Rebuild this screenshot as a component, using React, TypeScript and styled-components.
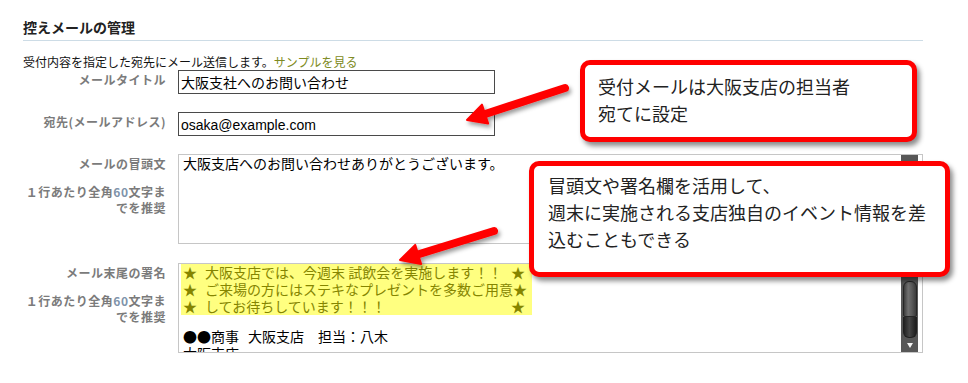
import React from 'react';
import styled, { createGlobalStyle } from 'styled-components';

const Global = createGlobalStyle`
  html, body { margin: 0; padding: 0; background: #fff; }
  body { font-family: "Noto Sans CJK JP", "Noto Sans", sans-serif; color: #222; }
`;

const Page = styled.div`
  position: relative;
  width: 968px;
  height: 383px;
  overflow: hidden;
  box-sizing: border-box;
  padding: 17px 45px 0 23px;
  background: #fff;
`;

const Heading = styled.h2`
  margin: 0;
  font-size: 14px;
  font-weight: bold;
  line-height: 20px;
  color: #222;
  padding-bottom: 3px;
  border-bottom: 1px solid #cddce6;
`;

const Desc = styled.p`
  margin: 13px 0 0;
  font-size: 12px;
  line-height: 16px;
  color: #111;
  white-space: nowrap;
`;

const SampleLink = styled.span`
  color: #7d8a22;
`;

const Form = styled.div`
  display: grid;
  grid-template-columns: 143px 1fr;
  column-gap: 12px;
  row-gap: 18px;
`;

const LabelCell = styled.div<{ $shift?: number }>`
  text-align: right;
  padding-top: ${(p) => 1 + (p.$shift ?? 0)}px;
  color: #7b7b7b;
  font-weight: bold;
  font-size: 12px;
  letter-spacing: 0.5px;
  white-space: nowrap;
`;

const LabelTitle = styled.div`
  line-height: 17px;
`;

const LabelNote = styled.div`
  margin-top: 12px;
  line-height: 16px;
`;

const Num = styled.span`
  color: #7f93aa;
`;

const FieldCell = styled.div<{ $shift?: number }>`
  margin-top: ${(p) => p.$shift ?? 0}px;
`;

const TextInput = styled.div`
  box-sizing: border-box;
  width: 317px;
  height: 24px;
  border: 1px solid #4a4a4a;
  padding: 0 2px;
  font-size: 14px;
  line-height: 22px;
  color: #000;
  white-space: nowrap;
  overflow: hidden;
`;

const EmailText = styled.span`
  font-family: "Liberation Sans", Arial, sans-serif;
`;

const TextArea = styled.div`
  box-sizing: border-box;
  width: 745px;
  height: 90px;
  border: 1px solid #c6c6c6;
  display: flex;
  overflow: hidden;
`;

const AreaContent = styled.div`
  flex: 1;
  padding: 0 0 0 2px;
  font-size: 14px;
  line-height: 17px;
  color: #000;
  overflow: hidden;
  white-space: nowrap;
`;

const AreaLine = styled.div`
  padding-left: 2px;
`;

const Highlight = styled.div`
  width: 351px;
  box-sizing: border-box;
  background: #ffff80;
  color: #858500;
  padding-left: 2px;
`;

const HLine = styled.div`
  display: flex;
  justify-content: space-between;
  padding-right: 7px;
`;

const Star = styled.span`
  margin-right: 8px;
`;

const Blank = styled.div`
  height: 13px;
`;

const Gap = styled.span`
  display: inline-block;
  width: 9px;
`;

const Scrollbar = styled.div`
  width: 17px;
  margin-right: 4px;
  background: #575757;
  display: flex;
  flex-direction: column;
  align-items: center;
  flex-shrink: 0;
`;

const ScrollSpace = styled.div<{ $h: number }>`
  height: ${(p) => p.$h}px;
  flex-shrink: 0;
`;

const Thumb = styled.div`
  box-sizing: border-box;
  width: 14px;
  height: 36px;
  border: 1px solid #262626;
  border-radius: 6px 6px 2px 2px;
  background: linear-gradient(to right, #3c3c3c, #707070 35%, #5a5a5a 65%, #3a3a3a);
  flex-shrink: 0;
`;

const TrackLower = styled.div`
  box-sizing: border-box;
  width: 14px;
  height: 21px;
  border: 1px solid #202020;
  border-top: none;
  border-radius: 0 0 6px 6px;
  background: linear-gradient(to right, #222, #474747 45%, #333 70%, #1e1e1e);
  flex-shrink: 0;
`;

const DownBtn = styled.div`
  flex: 1;
  display: flex;
  align-items: center;
  justify-content: center;
`;

const DownTri = styled.div`
  width: 0;
  height: 0;
  border-left: 3px solid transparent;
  border-right: 3px solid transparent;
  border-top: 5px solid #f4f4f4;
`;

const Callout = styled.div<{ $left: number; $top: number; $w: number; $h: number; $pt: number; $pl: number }>`
  position: absolute;
  left: ${(p) => p.$left}px;
  top: ${(p) => p.$top}px;
  width: ${(p) => p.$w}px;
  height: ${(p) => p.$h}px;
  box-sizing: border-box;
  border: 5px solid #ff0000;
  border-radius: 10px;
  background: #fff;
  box-shadow: 3px 4px 5px rgba(0, 0, 0, 0.45);
  padding: ${(p) => p.$pt}px ${(p) => p.$pl}px;
  font-size: 18px;
  line-height: 27px;
  color: #222;
  white-space: nowrap;
  z-index: 3;
`;

const ArrowLayer = styled.svg`
  position: absolute;
  left: 0;
  top: 0;
  width: 968px;
  height: 383px;
  pointer-events: none;
  z-index: 2;
`;

type Pt = [number, number];

function arrowParts(tail: Pt, tip: Pt, headLen = 19, halfW = 10) {
  const dx = tip[0] - tail[0];
  const dy = tip[1] - tail[1];
  const len = Math.hypot(dx, dy);
  const ux = dx / len;
  const uy = dy / len;
  const bx = tip[0] - ux * headLen;
  const by = tip[1] - uy * headLen;
  const nx = -uy;
  const ny = ux;
  const head = `${tip[0]},${tip[1]} ${bx + nx * halfW},${by + ny * halfW} ${bx - nx * halfW},${by - ny * halfW}`;
  const sx = bx + ux * 3;
  const sy = by + uy * 3;
  return { head, shaft: { x1: tail[0], y1: tail[1], x2: sx, y2: sy } };
}

const Arrow: React.FC<{ tail: Pt; tip: Pt }> = ({ tail, tip }) => {
  const a = arrowParts(tail, tip);
  return (
    <g filter="url(#ashadow)">
      <line {...a.shaft} stroke="#ff0000" strokeWidth={8} strokeLinecap="round" />
      <polygon points={a.head} fill="#ff0000" stroke="#ff0000" strokeWidth={2} strokeLinejoin="round" />
    </g>
  );
};

const ScrollbarView: React.FC<{ top: number }> = ({ top }) => (
  <Scrollbar>
    <ScrollSpace $h={top} />
    <Thumb />
    <TrackLower />
    <DownBtn>
      <DownTri />
    </DownBtn>
  </Scrollbar>
);

const Note: React.FC = () => (
  <LabelNote>
    １行あたり全角<Num>60</Num>文字ま
    <br />
    でを推奨
  </LabelNote>
);

export default function App() {
  return (
    <>
      <Global />
      <Page>
        <Heading>控えメールの管理</Heading>
        <Desc>
          受付内容を指定した宛先にメール送信します。<SampleLink>サンプルを見る</SampleLink>
        </Desc>
        <Form>
          <LabelCell>
            <LabelTitle>メールタイトル</LabelTitle>
          </LabelCell>
          <FieldCell>
            <TextInput>大阪支社へのお問い合わせ</TextInput>
          </FieldCell>

          <LabelCell>
            <LabelTitle>宛先(メールアドレス)</LabelTitle>
          </LabelCell>
          <FieldCell>
            <TextInput>
              <EmailText>osaka@example.com</EmailText>
            </TextInput>
          </FieldCell>

          <LabelCell>
            <LabelTitle>メールの冒頭文</LabelTitle>
            <Note />
          </LabelCell>
          <FieldCell>
            <TextArea>
              <AreaContent>
                <AreaLine>大阪支店へのお問い合わせありがとうございます。</AreaLine>
              </AreaContent>
              <ScrollbarView top={20} />
            </TextArea>
          </FieldCell>

          <LabelCell $shift={1}>
            <LabelTitle>メール末尾の署名</LabelTitle>
            <Note />
          </LabelCell>
          <FieldCell $shift={1}>
            <TextArea>
              <AreaContent>
                <Highlight>
                  <HLine>
                    <span>
                      <Star>★</Star>大阪支店では、今週末 試飲会を実施します！！
                    </span>
                    <span>★</span>
                  </HLine>
                  <HLine>
                    <span>
                      <Star>★</Star>ご来場の方にはステキなプレゼントを多数ご用意
                    </span>
                    <span>★</span>
                  </HLine>
                  <HLine>
                    <span>
                      <Star>★</Star>してお待ちしています！！！
                    </span>
                    <span>★</span>
                  </HLine>
                </Highlight>
                <Blank />
                <AreaLine>
                  ●●商事<Gap />大阪支店　担当：八木
                </AreaLine>
                <AreaLine>大阪支店</AreaLine>
              </AreaContent>
              <ScrollbarView top={17} />
            </TextArea>
          </FieldCell>
        </Form>

        <ArrowLayer viewBox="0 0 968 383">
          <defs>
            <filter id="ashadow" x="-20%" y="-50%" width="140%" height="200%">
              <feDropShadow dx="2" dy="3" stdDeviation="2" floodColor="#000" floodOpacity="0.4" />
            </filter>
          </defs>
          <Arrow tail={[565, 88]} tip={[467, 120]} />
          <Arrow tail={[494, 231]} tip={[400, 260]} />
        </ArrowLayer>

        <Callout $left={580} $top={60} $w={337} $h={82} $pt={8} $pl={13}>
          受付メールは大阪支店の担当者
          <br />
          宛てに設定
        </Callout>
        <Callout $left={529} $top={161} $w={421} $h={116} $pt={6} $pl={14}>
          冒頭文や署名欄を活用して、
          <br />
          週末に実施される支店独自のイベント情報を差
          <br />
          込むこともできる
        </Callout>
      </Page>
    </>
  );
}
